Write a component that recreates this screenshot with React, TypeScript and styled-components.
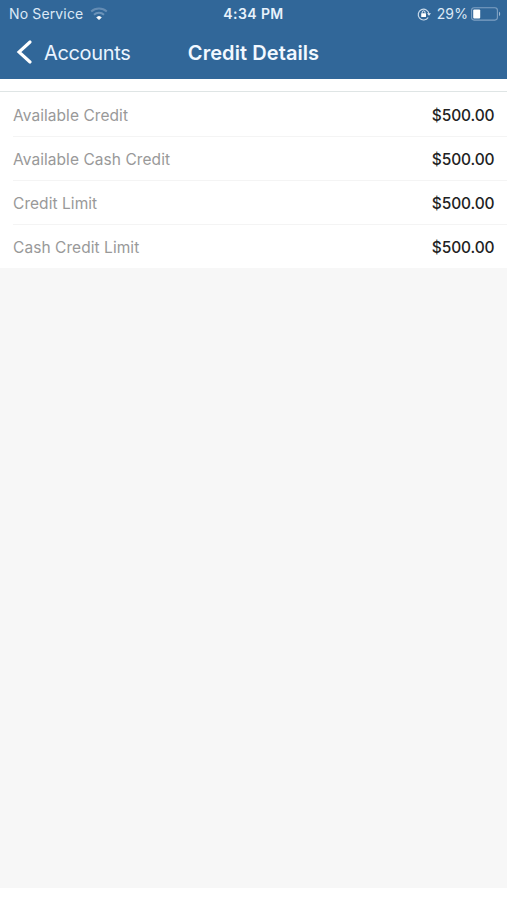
import React from "react";
import styled, { createGlobalStyle } from "styled-components";

const GlobalStyle = createGlobalStyle`
  * { box-sizing: border-box; }
  body { margin: 0; background: #fff; font-family: Inter, "Liberation Sans", sans-serif; }
`;

const Screen = styled.div`
  display: flex;
  flex-direction: column;
  height: 888px;
  background: #f7f7f7;
`;

const Header = styled.header`
  height: 79px;
  flex: none;
  background: #316799;
  color: #fff;
`;

const StatusBar = styled.div`
  display: grid;
  grid-template-columns: 1fr auto 1fr;
  align-items: center;
  height: 28px;
  padding: 0 6px;
  font-size: 14px;
  line-height: 28px;
  color: #dce9f6;
`;

const Carrier = styled.div`
  display: flex;
  align-items: center;
  gap: 7px;
  padding-left: 3px;
  letter-spacing: 0.14px;
`;

const Clock = styled.div`
  font-weight: 600;
  letter-spacing: 0.4px;
  color: #e8f2fc;
`;

const Power = styled.div`
  display: flex;
  align-items: center;
  justify-content: flex-end;
`;

const Percent = styled.span`
  margin: 0 3px 0 6px;
  letter-spacing: 0.1px;
`;

const NavBar = styled.nav`
  display: grid;
  grid-template-columns: 1fr auto 1fr;
  align-items: center;
  height: 48px;
  padding: 0 16px;
`;

const BackButton = styled.button`
  display: flex;
  align-items: center;
  gap: 11px;
  padding: 0;
  border: 0;
  background: none;
  color: #eaf4ff;
  font: 400 20px/48px Inter, sans-serif;
  letter-spacing: -0.35px;
`;

const BackLabel = styled.span`
  height: 48px;
  line-height: 50px;
`;

const Title = styled.h1`
  margin: 0;
  height: 48px;
  font-size: 20px;
  font-weight: 600;
  line-height: 50px;
  letter-spacing: 0.08px;
  color: #f2f8ff;
`;

const Spacer = styled.div`
  height: 13px;
  flex: none;
  background: #fff;
  border-bottom: 1px solid #dfe5e5;
`;

const List = styled.dl`
  margin: 0;
  padding-left: 13px;
  background: #fff;
`;

const Row = styled.div`
  display: flex;
  justify-content: space-between;
  height: 44px;
  padding-right: 12.5px;
  border-top: 1px solid #f4f4f4;
  font-size: 15.5px;
  line-height: 45px;

  &:first-child {
    border-top-color: transparent;
  }
`;

const Label = styled.dt`
  color: #999;
  letter-spacing: 0.06px;
`;

const Amount = styled.dd`
  margin: 0;
  font-weight: 500;
  letter-spacing: -0.12px;
  color: #222;
`;

const WifiIcon = () => (
  <svg width="18" height="14" viewBox="0 0 18 14" fill="none">
    <path d="M1.2 4.6a11.5 11.5 0 0 1 15.6 0" stroke="#648cb3" strokeWidth="2" />
    <path d="M4 7.7a7.4 7.4 0 0 1 10 0" stroke="#6c93b9" strokeWidth="2" />
    <path d="M6.8 10.4a3.6 3.6 0 0 1 4.4 0L9 12.6Z" fill="#fff" stroke="#fff" strokeLinejoin="round" />
  </svg>
);

const LockIcon = () => (
  <svg width="14" height="14" viewBox="0 0 14 14" fill="none">
    <path d="M11.2 10.5A5.4 5.4 0 1 1 12 7" stroke="#c9daea" strokeWidth="1.2" />
    <path d="M10 6.2h4l-2 2.6Z" fill="#dce9f6" />
    <rect x="4.2" y="6.3" width="4.8" height="3.6" rx=".5" fill="#fff" />
    <path d="M5.2 6.5V5.3a1.4 1.4 0 0 1 2.8 0v1.2" stroke="#e8f2fc" />
  </svg>
);

const BatteryIcon = () => (
  <svg width="30" height="14" viewBox="0 0 30 14" fill="none">
    <rect x=".6" y=".7" width="25.8" height="12.4" rx="2.5" stroke="#7fa1c3" strokeWidth="1.1" />
    <rect x="2.2" y="2.4" width="7" height="9" rx="1" fill="#fff" />
    <path d="M28 4.8v4.4c1.6-.5 1.6-3.9 0-4.4Z" fill="#9db7d1" />
  </svg>
);

const ChevronIcon = () => (
  <svg width="17" height="24" viewBox="0 0 17 24" fill="none">
    <path d="M14 2 3 12l11 10" stroke="#fff" strokeWidth="3.1" strokeLinecap="round" />
  </svg>
);

const credits = [
  ["Available Credit", "$500.00"],
  ["Available Cash Credit", "$500.00"],
  ["Credit Limit", "$500.00"],
  ["Cash Credit Limit", "$500.00"],
];

export default function App() {
  return (
    <>
      <GlobalStyle />
      <Screen>
        <Header>
          <StatusBar>
            <Carrier>No Service<WifiIcon /></Carrier>
            <Clock>4:34 PM</Clock>
            <Power><LockIcon /><Percent>29%</Percent><BatteryIcon /></Power>
          </StatusBar>
          <NavBar>
            <BackButton><ChevronIcon /><BackLabel>Accounts</BackLabel></BackButton>
            <Title>Credit Details</Title>
          </NavBar>
        </Header>
        <Spacer />
        <List>
          {credits.map(([label, amount]) => (
            <Row key={label}>
              <Label>{label}</Label>
              <Amount>{amount}</Amount>
            </Row>
          ))}
        </List>
      </Screen>
    </>
  );
}
